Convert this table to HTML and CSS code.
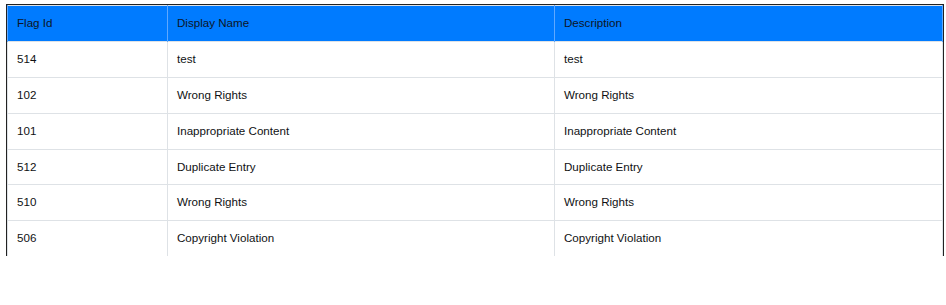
FILE: index.html
```html
<!DOCTYPE html>
<html>
<head>
<meta charset="utf-8">
<link rel="stylesheet" href="styles.css">
</head>
<body>
<div class="frame">
  <table class="flags">
    <colgroup>
      <col class="c1"><col class="c2"><col class="c3">
    </colgroup>
    <thead>
      <tr><th>Flag Id</th><th>Display Name</th><th>Description</th></tr>
    </thead>
    <tbody>
      <tr><td>514</td><td>test</td><td>test</td></tr>
      <tr><td>102</td><td>Wrong Rights</td><td>Wrong Rights</td></tr>
      <tr><td>101</td><td>Inappropriate Content</td><td>Inappropriate Content</td></tr>
      <tr><td>512</td><td>Duplicate Entry</td><td>Duplicate Entry</td></tr>
      <tr><td>510</td><td>Wrong Rights</td><td>Wrong Rights</td></tr>
      <tr><td>506</td><td>Copyright Violation</td><td>Copyright Violation</td></tr>
    </tbody>
  </table>
</div>
</body>
</html>
```

FILE: styles.css
```css
html, body {
  margin: 0;
  padding: 0;
  background: #ffffff;
}
body {
  padding: 4px 2px 0 6px;
  font-family: "Liberation Sans", Arial, sans-serif;
  font-size: 11.6px;
  color: #111111;
}
.frame {
  width: 936px;
  height: 251px;
  border: 1px solid #222222;
  border-bottom: none;
  overflow: hidden;
  box-sizing: content-box;
}
.flags {
  width: 936px;
  border-collapse: collapse;
  border: 1px solid #dee2e6;
  table-layout: fixed;
}
.c1 { width: 160px; }
.c2 { width: 387px; }
.c3 { width: auto; }
.flags th, .flags td {
  text-align: left;
  font-weight: normal;
  padding: 8px 9px 8px 9px;
  line-height: 18.8px;
  border-left: 1px solid #dee2e6;
  border-right: 1px solid #dee2e6;
}
.flags thead th {
  background: #007bff;
  color: #0d1526;
  padding-top: 8px;
  padding-bottom: 8px;
  border-left-color: #5fa8ff;
  border-right-color: #5fa8ff;
}
.flags tbody td {
  border-top: 1px solid #dee2e6;
  color: #0f1113;
  line-height: 18.9px;
}
.flags tbody tr:last-child td {
  padding-bottom: 20px;
}
```
